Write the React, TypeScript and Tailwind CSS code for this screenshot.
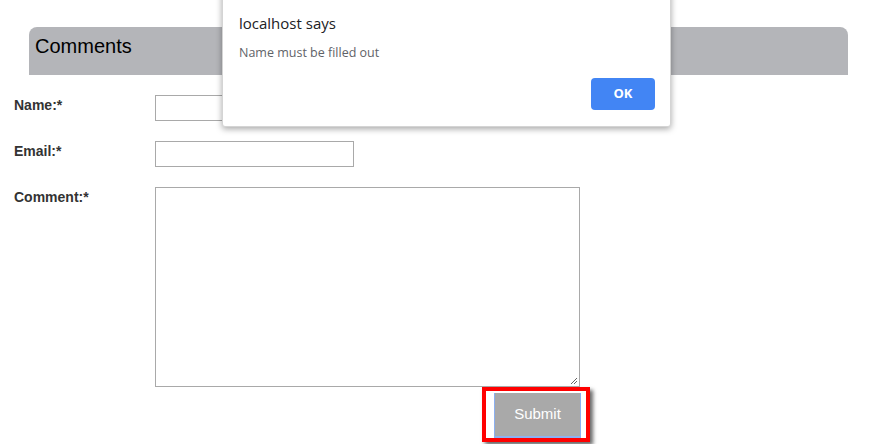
import React from "react";

export default function App() {
  return (
    <div className="relative w-[874px] h-[444px] overflow-hidden bg-white" style={{ fontFamily: '"Liberation Sans", Arial, sans-serif' }}>
      <div className="pt-[27px] pl-[29px]">
        <div className="w-[819px] h-[48px] bg-[#b4b5b9] rounded-t-[8px] pl-[6px] pt-[7px] text-[20px] leading-[24px] text-black">
          Comments
        </div>
      </div>
      <div className="flex flex-col gap-[20px] pt-[20px]">
        <div className="flex">
          <div className="w-[155px] pl-[14px] pt-[2px] text-[14px] leading-[16px] font-bold text-[#333]">Name:*</div>
          <div className="w-[199px] h-[26px] border border-[#a9a9a9]" />
        </div>
        <div className="flex">
          <div className="w-[155px] pl-[14px] pt-[2px] text-[14px] leading-[16px] font-bold text-[#333]">Email:*</div>
          <div className="w-[199px] h-[26px] border border-[#a9a9a9]" />
        </div>
        <div className="flex">
          <div className="w-[155px] pl-[14px] pt-[2px] text-[14px] leading-[16px] font-bold text-[#333]">Comment:*</div>
          <div className="relative w-[425px] h-[200px] border border-[#a9a9a9]">
            <svg className="absolute right-[1px] bottom-[1px]" width="9" height="9" viewBox="0 0 9 9">
              <path d="M8 2 L2 8 M8 5 L5 8" stroke="#666" strokeWidth="1" />
            </svg>
          </div>
        </div>
      </div>
      <div className="ml-[482px] w-[108px] h-[55px] border-[4px] border-[#ff0000] bg-white pl-[8px] pr-[4px] pt-[2px] shadow-[3px_3px_4px_rgba(0,0,0,0.6)]">
        <div className="w-[87px] h-[45px] bg-[#a9a9a9] border-l border-r border-b-2 border-[#8cb0f0] flex items-center justify-center text-white text-[15px]">
          Submit
        </div>
      </div>

      <div
        className="absolute left-[222px] top-[-10px] w-[449px] h-[137px] bg-white rounded-[3px] border border-[#d4d4d4] shadow-[0_2px_6px_rgba(0,0,0,0.35)]"
        style={{ fontFamily: '"Open Sans", "Noto Sans", sans-serif' }}
      >
        <div className="pl-[16px] pt-[22px] text-[15px] leading-[20px] text-[#202124]">localhost says</div>
        <div className="pl-[16px] pt-[12px] text-[12.5px] leading-[16px] text-[#5f6368]">Name must be filled out</div>
        <div className="flex justify-end pr-[15px] pt-[17px]">
          <div className="w-[64px] h-[32px] rounded-[4px] bg-[#4285f4] flex items-center justify-center text-white text-[13px] font-bold">
            OK
          </div>
        </div>
      </div>
    </div>
  );
}
